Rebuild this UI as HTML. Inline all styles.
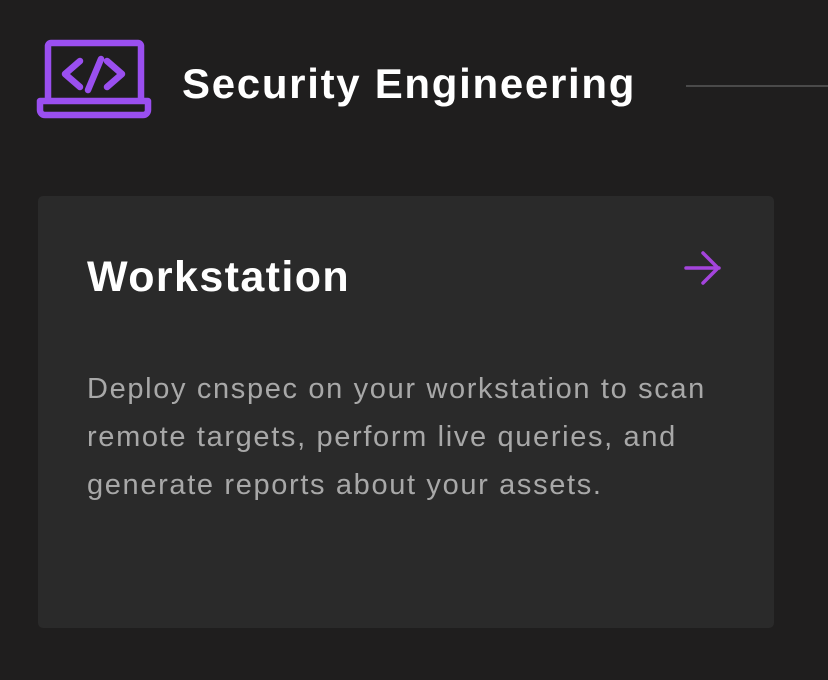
<!DOCTYPE html>
<html><head><style>
body{margin:0;width:828px;height:680px;background:#1f1e1e;font-family:"Liberation Sans",sans-serif;overflow:hidden;position:relative}
.t{position:absolute;left:182px;top:60px;color:#fff;font-size:42px;font-weight:bold;letter-spacing:1.7px;white-space:nowrap}
.line{position:absolute;left:686px;top:85px;width:142px;height:2px;background:#4a4a4a}
.card{position:absolute;left:38px;top:196px;width:736px;height:432px;background:#2a2a2a;border-radius:5px}
.h{position:absolute;left:49px;top:57px;color:#fff;font-size:43px;font-weight:bold;letter-spacing:1.4px}
.p{position:absolute;left:49px;top:169px;width:700px;color:#a8a8a8;font-size:29px;letter-spacing:1.65px;line-height:48px;white-space:nowrap}
</style></head><body>
<svg style="position:absolute;left:0;top:0" width="200" height="140">
<g fill="none" stroke="#9a4ff0" stroke-width="6.5" stroke-linecap="round" stroke-linejoin="round">
<path d="M48 99V46a3 3 0 0 1 3-3h87a3 3 0 0 1 3 3v53"/>
<path d="M40 101h108v9a5 5 0 0 1-5 5H45a5 5 0 0 1-5-5z"/>
<path d="M80 61l-15 13 15 13M107 61l15 13-15 13M101 59l-13 31"/>
</g>
</svg>
<div class="t">Security Engineering</div>
<div class="line"></div>
<div class="card">
<div class="h">Workstation</div>
<svg style="position:absolute;left:640px;top:50px" width="50" height="40"><g fill="none" stroke="#a444dc" stroke-width="3.5" stroke-linecap="round" stroke-linejoin="round"><path d="M8 22h33M25 7l15 15-15 15"/></g></svg>
<div class="p">Deploy cnspec on your workstation to scan<br>remote targets, perform live queries, and<br>generate reports about your assets.</div>
</div>
</body></html>
